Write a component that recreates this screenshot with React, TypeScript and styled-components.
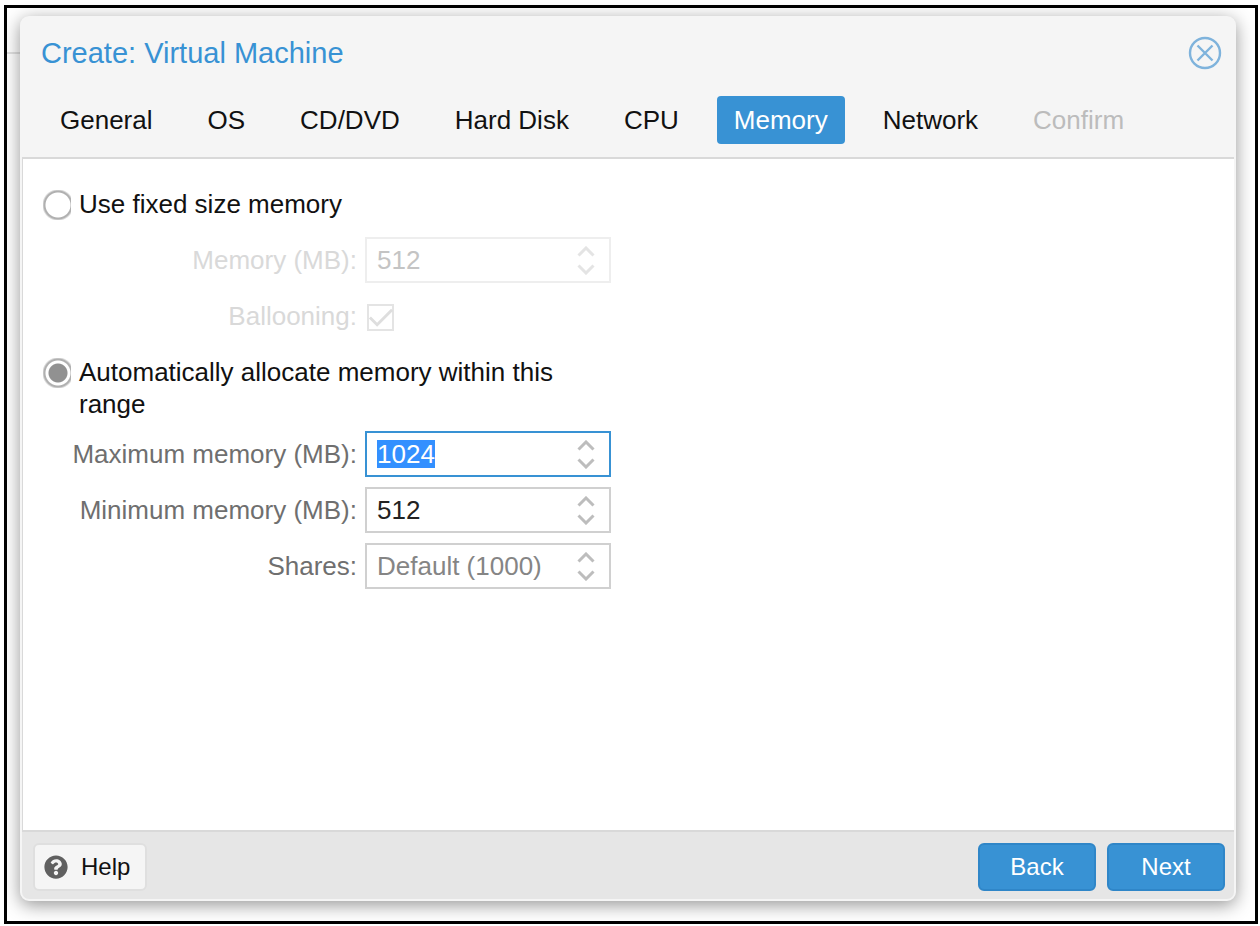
import React, { useEffect, useRef } from "react";
import styled, { createGlobalStyle, css } from "styled-components";
import { FaQuestionCircle } from "react-icons/fa";

const blue = "#3892d4";

const GlobalStyle = createGlobalStyle`
  *, *::before, *::after { box-sizing: border-box; }
  body {
    margin: 0;
    background: #fff;
    color: #111;
    font-family: "Liberation Sans", Arial, sans-serif;
    font-size: 26px;
    line-height: 32px;
  }
  button, input { font: inherit; }
`;

const Page = styled.div`
  display: flex;
  min-height: 100vh;
  padding: 5px 2px 2px 4px;
`;

const Frame = styled.div`
  display: flex;
  flex: 1;
  padding: 8px 19px 20px 13px;
  border: 3px solid #000;
  background: linear-gradient(#e2e2e2, #e2e2e2) 0 44px / 16px 2px no-repeat #fff;
`;

const Dialog = styled.section`
  display: flex;
  flex: 1;
  flex-direction: column;
  overflow: hidden;
  border: 2px solid #f5f5f5;
  border-radius: 9px;
  background: #f5f5f5;
  box-shadow: 0 4px 18px rgba(0, 0, 0, 0.42);
`;

const TitleBar = styled.header`
  display: flex;
  align-items: center;
  justify-content: space-between;
  padding: 17px 12px 10px 19px;
`;

const Title = styled.h1`
  margin: 0;
  color: ${blue};
  font-size: 29px;
  font-weight: 400;
  line-height: 36px;
`;

const CloseButton = styled.button`
  display: flex;
  padding: 0;
  border: 0;
  background: none;
  color: #7fb3dc;
`;

const TabBar = styled.nav`
  display: flex;
  gap: 21px;
  padding: 15px 21px 13px;
`;

const Tab = styled.button<{ $active?: boolean }>`
  height: 48px;
  padding: 0 17px;
  border: 0;
  border-radius: 4px;
  background: ${(p) => (p.$active ? blue : "transparent")};
  color: ${(p) => (p.$active ? "#fff" : "#111")};
  white-space: nowrap;
  &:disabled { color: #bcbcbc; }
`;

const Body = styled.main`
  flex: 1;
  padding: 22px 20px;
  border: solid #d9d9d9;
  border-width: 2px 0 2px 1px;
  background: #fff;
`;

const Form = styled.form`
  display: flex;
  flex-direction: column;
  gap: 10px;
  max-width: 568px;
`;

const Choice = styled.label`
  display: flex;
  align-items: flex-start;
  gap: 8px;
  min-height: 46px;
  padding: 7px 20px 1px 0;
`;

const Radio = styled.input`
  flex: none;
  width: 28px;
  height: 30px;
  margin: 2px 0 0;
  appearance: none;
  background: radial-gradient(circle at 15px 15px, transparent 12px, #b0b0b0 13px, #b0b0b0 14px, transparent 16px);
  &:checked {
    background:
      radial-gradient(circle at 15px 15px, #919191 9px, transparent 10px),
      radial-gradient(circle at 15px 15px, transparent 12px, #b0b0b0 13px, #b0b0b0 14px, transparent 16px);
  }
`;

const FieldRow = styled.div<{ $disabled?: boolean }>`
  display: flex;
  align-items: center;
  justify-content: flex-end;
  gap: 8px;
  height: 46px;
  color: ${(p) => (p.$disabled ? "#d9d9d9" : "#6f6f6f")};
`;

const SpinnerBox = styled.div<{ $disabled?: boolean }>`
  display: flex;
  width: 246px;
  height: 46px;
  border: 2px solid #d0d0d0;
  background: #fff;
  color: #bdbdbd;
  &:focus-within { border-color: ${blue}; }
  ${(p) =>
    p.$disabled &&
    css`
      border-color: #eeeeee;
      color: #e4e4e4;
    `}
`;

const NumberInput = styled.input`
  flex: 1;
  min-width: 0;
  padding: 0 0 0 10px;
  border: 0;
  outline: 0;
  background: none;
  color: #222;
  line-height: 28px;
  &:disabled { color: #c4c4c4; }
  &::placeholder { color: #858585; opacity: 1; }
  &::selection { background: #3390ff; color: #fff; }
`;

const Steps = styled.div`
  display: flex;
  flex-direction: column;
  justify-content: center;
  gap: 7px;
  padding-right: 14px;
`;

const StepButton = styled.button`
  display: flex;
  padding: 0;
  border: 0;
  background: none;
  color: inherit;
`;

const CheckCell = styled.div`
  display: flex;
  width: 246px;
  padding: 2px 0 0 2px;
`;

const CheckWrap = styled.span`
  display: grid;
  > * { grid-area: 1 / 1; }
`;

const CheckInput = styled.input`
  width: 27px;
  height: 27px;
  margin: 0;
  border: 2px solid #e4e4e4;
  appearance: none;
`;

const Footer = styled.footer`
  display: flex;
  align-items: center;
  gap: 11px;
  padding: 11px 9px 8px 11px;
  background: #e6e6e6;
`;

const ActionButton = styled.button<{ $primary?: boolean }>`
  display: flex;
  align-items: center;
  justify-content: ${(p) => (p.$primary ? "center" : "flex-start")};
  gap: 13px;
  height: 48px;
  min-width: ${(p) => (p.$primary ? "118px" : "114px")};
  padding: 0 9px;
  border: 2px solid ${(p) => (p.$primary ? "#2f86c8" : "#dfdfdf")};
  border-radius: 6px;
  background: ${(p) => (p.$primary ? blue : "#f5f5f5")};
  color: ${(p) => (p.$primary ? "#fff" : "#111")};
  font-size: 24px;
  svg { color: #606060; }
`;

const Spacer = styled.div`
  flex: 1;
`;

type FieldProps = {
  id: string;
  label: string;
  value?: string;
  placeholder?: string;
  disabled?: boolean;
  selected?: boolean;
};

function Chevron({ down }: { down?: boolean }) {
  return (
    <svg width="18" height="11" viewBox="0 0 18 11" fill="none" stroke="currentColor" strokeWidth="3">
      <path d={down ? "M1.5 1.5 9 9l7.5-7.5" : "M1.5 9.5 9 2l7.5 7.5"} />
    </svg>
  );
}

function NumberField({ id, label, value, placeholder, disabled, selected }: FieldProps) {
  const input = useRef<HTMLInputElement>(null);

  useEffect(() => {
    if (selected) {
      input.current?.focus();
      input.current?.select();
    }
  }, [selected]);

  return (
    <FieldRow $disabled={disabled}>
      <label htmlFor={id}>{label}</label>
      <SpinnerBox $disabled={disabled}>
        <NumberInput
          ref={input}
          id={id}
          type="text"
          inputMode="numeric"
          defaultValue={value}
          placeholder={placeholder}
          disabled={disabled}
        />
        <Steps>
          <StepButton type="button" tabIndex={-1} disabled={disabled} aria-label="Increase">
            <Chevron />
          </StepButton>
          <StepButton type="button" tabIndex={-1} disabled={disabled} aria-label="Decrease">
            <Chevron down />
          </StepButton>
        </Steps>
      </SpinnerBox>
    </FieldRow>
  );
}

const tabs = ["General", "OS", "CD/DVD", "Hard Disk", "CPU", "Memory", "Network", "Confirm"];

export default function App() {
  return (
    <Page>
      <GlobalStyle />
      <Frame>
        <Dialog role="dialog" aria-labelledby="dialog-title">
          <TitleBar>
            <Title id="dialog-title">Create: Virtual Machine</Title>
            <CloseButton type="button" aria-label="Close">
              <svg width="34" height="34" viewBox="0 0 34 34" fill="none" stroke="currentColor">
                <circle cx="17" cy="17" r="15" strokeWidth="2.4" />
                <path d="M9.5 9.5l15 15M24.5 9.5l-15 15" strokeWidth="2.4" />
              </svg>
            </CloseButton>
          </TitleBar>
          <TabBar>
            {tabs.map((name) => (
              <Tab key={name} type="button" $active={name === "Memory"} disabled={name === "Confirm"}>
                {name}
              </Tab>
            ))}
          </TabBar>
          <Body>
            <Form>
              <Choice>
                <Radio type="radio" name="mode" value="fixed" />
                <span>Use fixed size memory</span>
              </Choice>
              <NumberField id="memory" label="Memory (MB):" value="512" disabled />
              <FieldRow $disabled>
                <label htmlFor="ballooning">Ballooning:</label>
                <CheckCell>
                  <CheckWrap>
                    <CheckInput id="ballooning" type="checkbox" defaultChecked disabled />
                    <svg width="27" height="27" viewBox="0 0 28 28" fill="none" stroke="#dedede" strokeWidth="3">
                      <path d="M3 14l7.5 7.5L26 6" />
                    </svg>
                  </CheckWrap>
                </CheckCell>
              </FieldRow>
              <Choice>
                <Radio type="radio" name="mode" value="auto" defaultChecked />
                <span>Automatically allocate memory within this range</span>
              </Choice>
              <NumberField id="maximum" label="Maximum memory (MB):" value="1024" selected />
              <NumberField id="minimum" label="Minimum memory (MB):" value="512" />
              <NumberField id="shares" label="Shares:" placeholder="Default (1000)" />
            </Form>
          </Body>
          <Footer>
            <ActionButton type="button">
              <FaQuestionCircle size={24} />
              Help
            </ActionButton>
            <Spacer />
            <ActionButton type="button" $primary>Back</ActionButton>
            <ActionButton type="button" $primary>Next</ActionButton>
          </Footer>
        </Dialog>
      </Frame>
    </Page>
  );
}
